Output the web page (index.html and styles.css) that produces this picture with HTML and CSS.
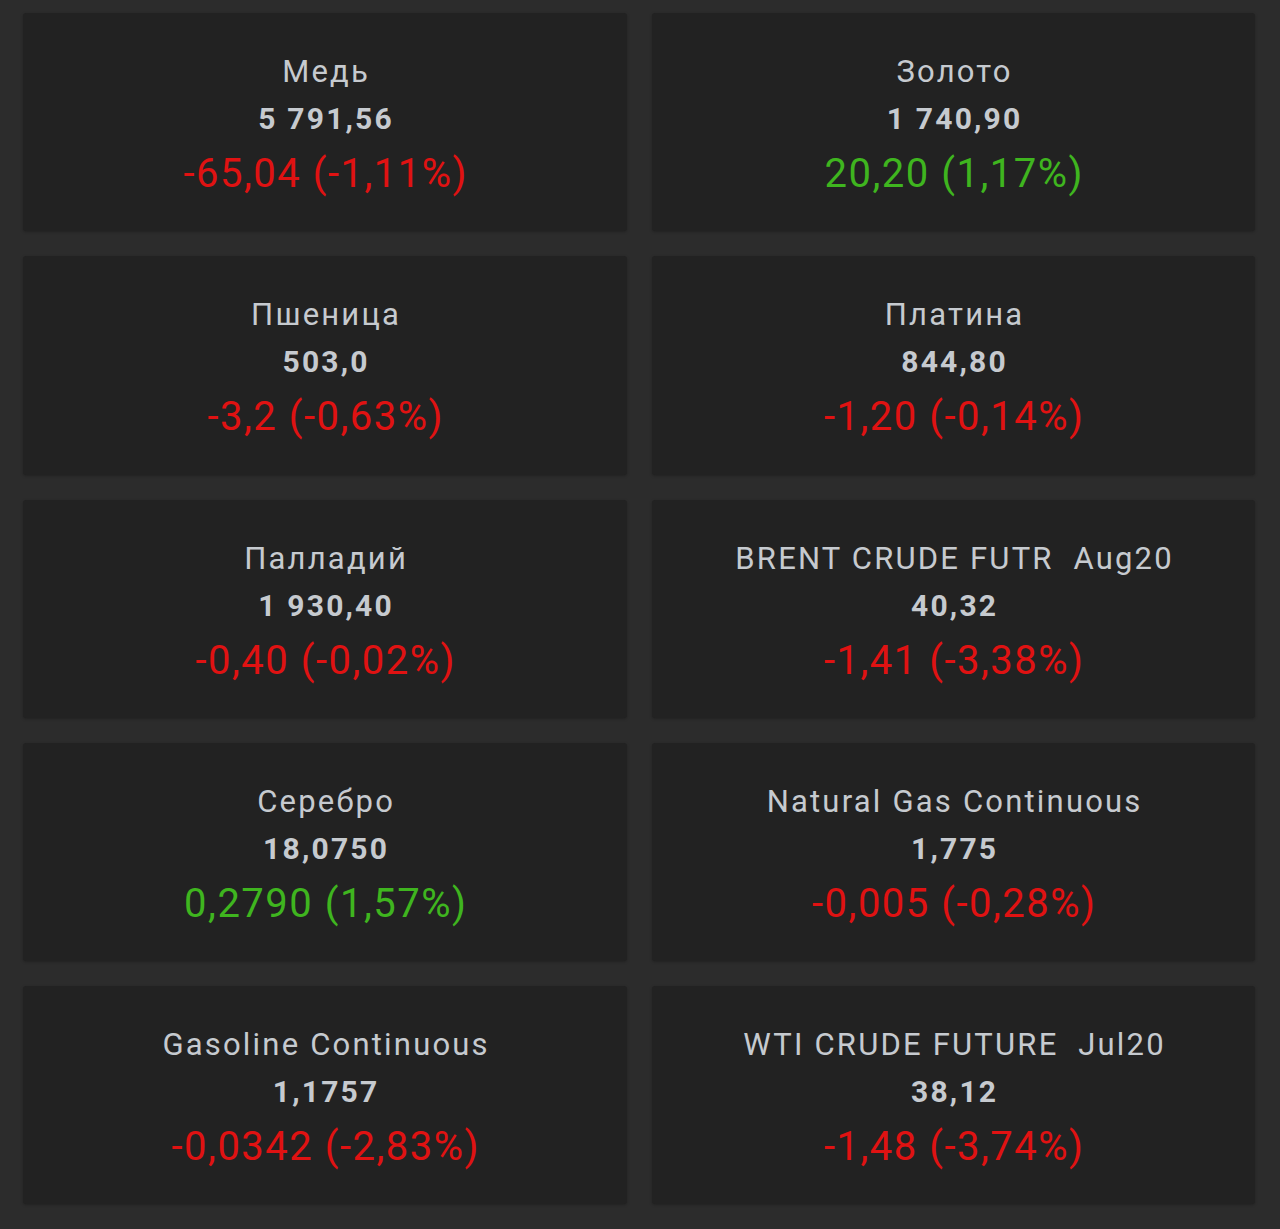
FILE: index.html
```html
<!DOCTYPE html>
<html lang="ru">
<head>
<meta charset="utf-8">
<title>Товары</title>
<link rel="stylesheet" href="styles.css">
</head>
<body>
<main class="grid">
  <section class="card"><div class="name">Медь</div><div class="price">5 791,56</div><div class="chg down">-65,04 (-1,11%)</div></section>
  <section class="card"><div class="name">Золото</div><div class="price">1 740,90</div><div class="chg up">20,20 (1,17%)</div></section>
  <section class="card"><div class="name">Пшеница</div><div class="price">503,0</div><div class="chg down">-3,2 (-0,63%)</div></section>
  <section class="card"><div class="name">Платина</div><div class="price">844,80</div><div class="chg down">-1,20 (-0,14%)</div></section>
  <section class="card"><div class="name">Палладий</div><div class="price">1 930,40</div><div class="chg down">-0,40 (-0,02%)</div></section>
  <section class="card"><div class="name">BRENT CRUDE FUTR&nbsp; Aug20</div><div class="price">40,32</div><div class="chg down">-1,41 (-3,38%)</div></section>
  <section class="card"><div class="name">Серебро</div><div class="price">18,0750</div><div class="chg up">0,2790 (1,57%)</div></section>
  <section class="card"><div class="name">Natural Gas Continuous</div><div class="price">1,775</div><div class="chg down">-0,005 (-0,28%)</div></section>
  <section class="card"><div class="name">Gasoline Continuous</div><div class="price">1,1757</div><div class="chg down">-0,0342 (-2,83%)</div></section>
  <section class="card"><div class="name">WTI CRUDE FUTURE&nbsp; Jul20</div><div class="price">38,12</div><div class="chg down">-1,48 (-3,74%)</div></section>
</main>
</body>
</html>
```
FILE: styles.css
```css
html, body {
  margin: 0;
  padding: 0;
  background: #2c2c2c;
}
body {
  font-family: Roboto, "Noto Sans", sans-serif;
  min-height: 1229px;
}
.grid {
  display: grid;
  grid-template-columns: 604px 603px;
  column-gap: 25px;
  row-gap: 25px;
  padding: 13px 25px 0 23px;
}
.card {
  background: #222222;
  border-radius: 3px;
  box-shadow: 0 1px 3px rgba(0,0,0,0.25);
  height: 218.25px;
  box-sizing: border-box;
  padding: 39px 0 29px;
  text-align: center;
}
.name {
  font-size: 31px;
  line-height: 40px;
  color: #c6cacf;
  letter-spacing: 2.2px;
  padding-left: 2.2px;
}
.price {
  font-size: 30px;
  line-height: 54px;
  font-weight: 700;
  color: #c6cacf;
  letter-spacing: 2.2px;
  padding-left: 2.2px;
}
.chg {
  font-size: 40px;
  line-height: 56px;
  letter-spacing: 1.5px;
  padding-left: 1.5px;
}
.down { color: #e01212; }
.up { color: #3fb51f; }
```
